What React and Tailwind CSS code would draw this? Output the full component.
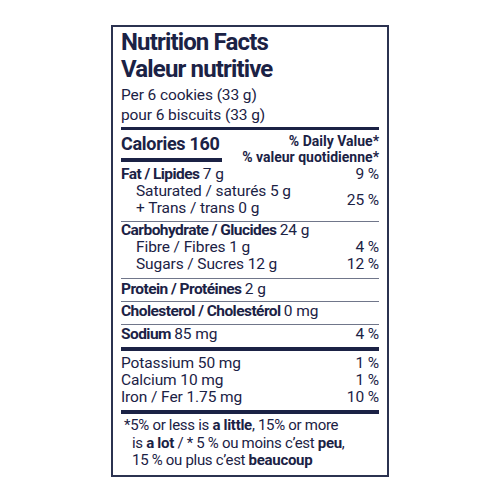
const rows = {
  fat: [
    ['Saturated / saturés 5 g'],
    ['+ Trans / trans 0 g'],
  ],
  carbs: [
    ['Fibre / Fibres 1 g', '4 %'],
    ['Sugars / Sucres 12 g', '12 %'],
  ],
  minerals: [
    ['Potassium 50 mg', '1 %'],
    ['Calcium 10 mg', '1 %'],
    ['Iron / Fer 1.75 mg', '10 %'],
  ],
};

function Line({ label, amount, value, sub }) {
  return (
    <div className={`flex justify-between h-[17px] leading-[17px] ${sub ? 'pl-[15px]' : ''}`}>
      <span className="whitespace-nowrap">
        {label && <b className="font-bold tracking-[-0.55px]">{label}</b>}
        {amount}
      </span>
      {value && <span>{value}</span>}
    </div>
  );
}

function App() {
  return (
    <div className="w-full h-[500px] flex justify-center pt-[25px] bg-white">
      <div
        className="w-[278px] self-start border-2 border-[#2b3250] px-[8px] pt-[2px] pb-[5px] text-[#1b2245] text-[15.5px] tracking-[-0.1px]"
        style={{ fontFamily: 'Roboto, "Liberation Sans", sans-serif' }}
      >
        <h1 className="font-bold text-[24px] leading-[27px] tracking-[-0.85px]">
          Nutrition Facts
          <br />
          Valeur nutritive
        </h1>
        <p className="mt-[3px] leading-[19.5px]">
          Per 6 cookies (33 g)
          <br />
          pour 6 biscuits (33 g)
        </p>
        <div className="mt-[2px] h-[3px] bg-[#1b2245]" />

        <div className="flex justify-between items-start pt-[4px]">
          <div className="w-[101px]">
            <div className="font-bold text-[18px] leading-[20px] tracking-[-0.3px] whitespace-nowrap">Calories 160</div>
            <div className="mt-[4px] h-[4px] bg-[#1b2245]" />
          </div>
          <div className="font-bold text-[14px] leading-[15.5px] tracking-normal text-right whitespace-nowrap">
            % Daily Value*
            <br />
            % valeur quotidienne*
          </div>
        </div>

        <div className="pt-[1px]">
          <Line label="Fat / Lipides " amount="7 g" value="9 %" />
          <div className="flex justify-between items-center">
            <div>
              {rows.fat.map(([t]) => (
                <Line key={t} amount={t} sub />
              ))}
            </div>
            <span className="pt-[2px]">25 %</span>
          </div>
        </div>
        <div className="mt-[4px] h-px bg-[#70768a]" />

        <div>
          <Line label="Carbohydrate / Glucides " amount="24 g" />
          {rows.carbs.map(([t, v]) => (
            <Line key={t} amount={t} value={v} sub />
          ))}
        </div>
        <div className="mt-[5px] h-px bg-[#70768a]" />

        <div className="mt-[2px]">
          <Line label="Protein / Protéines " amount="2 g" />
        </div>
        <div className="mt-[3px] h-px bg-[#70768a]" />

        <div className="mt-[1px]">
          <Line label="Cholesterol / Cholestérol " amount="0 mg" />
        </div>
        <div className="mt-[4px] h-px bg-[#70768a]" />

        <div className="mt-[1px]">
          <Line label="Sodium " amount="85 mg" value="4 %" />
        </div>
        <div className="mt-[4px] h-[4px] bg-[#1b2245]" />

        <div className="pt-[4px]">
          {rows.minerals.map(([t, v]) => (
            <Line key={t} amount={t} value={v} />
          ))}
        </div>
        <div className="mt-[4px] h-[4px] bg-[#1b2245]" />

        <p className="pt-[3px] pl-[11px] -indent-[8px] text-[15px] leading-[17.5px] tracking-[-0.3px] whitespace-nowrap">
          *5% or less is <b>a little</b>, 15% or more
          <br />
          is <b>a lot</b> / * 5 % ou moins c’est <b>peu</b>,
          <br />
          15 % ou plus c’est <b>beaucoup</b>
        </p>
      </div>
    </div>
  );
}

export default App;
